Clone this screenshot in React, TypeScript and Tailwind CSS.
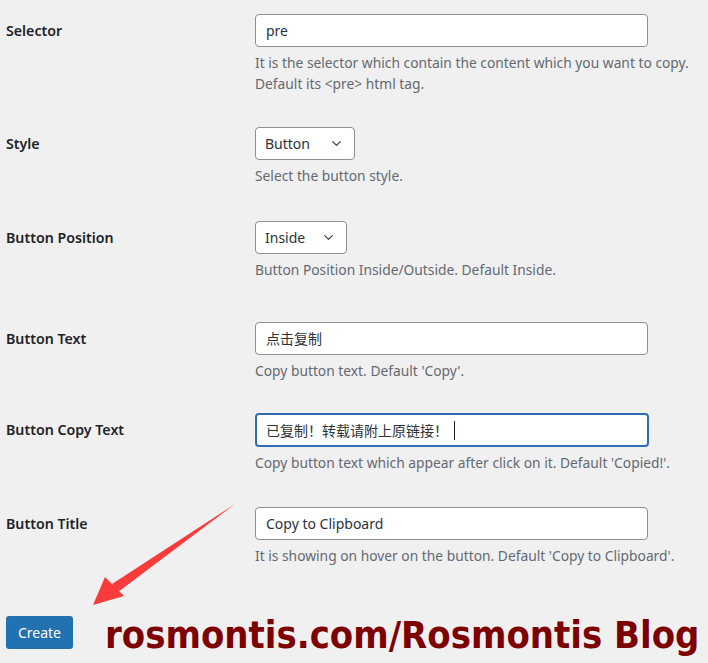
import { ChevronDown } from "lucide-react";

type Row = {
  label: string;
  kind: "text" | "select" | "focus";
  value: string;
  width?: string;
  desc: string[];
  height: string;
};

const rows: Row[] = [
  {
    label: "Selector",
    kind: "text",
    value: "pre",
    desc: [
      "It is the selector which contain the content which you want to copy.",
      "Default its <pre> html tag.",
    ],
    height: "h-[113px]",
  },
  { label: "Style", kind: "select", value: "Button", width: "w-[100px]", desc: ["Select the button style."], height: "h-[94px]" },
  {
    label: "Button Position",
    kind: "select",
    value: "Inside",
    width: "w-[92px]",
    desc: ["Button Position Inside/Outside. Default Inside."],
    height: "h-[101px]",
  },
  { label: "Button Text", kind: "text", value: "点击复制", desc: ["Copy button text. Default 'Copy'."], height: "h-[91px]" },
  {
    label: "Button Copy Text",
    kind: "focus",
    value: "已复制！转载请附上原链接！",
    desc: ["Copy button text which appear after click on it. Default 'Copied!'."],
    height: "h-[94px]",
  },
  {
    label: "Button Title",
    kind: "text",
    value: "Copy to Clipboard",
    desc: ["It is showing on hover on the button. Default 'Copy to Clipboard'."],
    height: "h-[123px]",
  },
];

const Field = ({ row }: { row: Row }) => {
  if (row.kind === "select") {
    return (
      <div
        className={`${row.width} h-[33px] flex items-center justify-between pl-[9px] pr-[10px] bg-white border border-[#8c8f94] rounded-[4px] text-[14px] text-[#2c3338]`}
      >
        <span>{row.value}</span>
        <ChevronDown size={15} strokeWidth={1.75} className="text-[#2c3338]" />
      </div>
    );
  }
  if (row.kind === "focus") {
    return (
      <div className="w-[394px] h-[34px] flex items-center pl-[9px] bg-white border-2 border-[#2f6eb5] rounded-[4px] text-[14px] text-[#2c3338]">
        <span>{row.value}</span>
        <span className="ml-[6px] w-px h-[19px] bg-[#1d2327]" />
      </div>
    );
  }
  return (
    <div className="w-[393px] h-[33px] flex items-center pl-[10px] bg-white border border-[#8c8f94] rounded-[4px] text-[14px] text-[#2c3338]">
      {row.value}
    </div>
  );
};

export default function App() {
  return (
    <div
      className="relative w-[708px] h-[663px] overflow-hidden bg-[#f0f0f1] text-[#1d2327]"
      style={{ fontFamily: '"Noto Sans", "Noto Sans CJK SC", sans-serif' }}
    >
      <div className="pl-[6px]">
        {rows.map((row) => (
          <div key={row.label} className={`flex pt-[14px] ${row.height}`}>
            <div className="w-[249px] shrink-0 h-[33px] flex items-center font-semibold text-[14.2px]">{row.label}</div>
            <div className="flex flex-col">
              <Field row={row} />
              <div className="mt-[5px] text-[#646970] text-[13.8px] leading-[21px] whitespace-nowrap">
                {row.desc.map((d) => (
                  <div key={d}>{d}</div>
                ))}
              </div>
            </div>
          </div>
        ))}
        <div className="flex items-start">
          <button className="shrink-0 w-[67px] h-[33px] rounded-[3px] bg-[#2271b1] text-white text-[14px]">Create</button>
          <span
            className="ml-[32px] mt-[-2px] origin-left scale-x-[0.92] whitespace-pre text-[37px] leading-[44px] font-bold text-[#7d0000]"
            style={{ fontFamily: '"DejaVu Sans", sans-serif' }}
          >
            rosmontis.com/Rosmontis Blog
          </span>
        </div>
      </div>

      {/* red arrow */}
      <svg className="absolute left-0 top-0 pointer-events-none" width="708" height="663" viewBox="0 0 708 663">
        <path d="M235 504 L112 584 L118 592 Z" fill="#f93b3b" />
        <path d="M93 605 L105 577 L124 596 Z" fill="#f93b3b" />
      </svg>
    </div>
  );
}
